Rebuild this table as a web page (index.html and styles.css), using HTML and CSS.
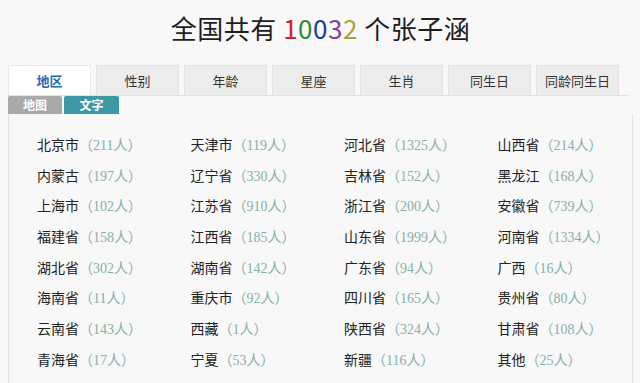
FILE: index.html
```html
<!DOCTYPE html>
<html lang="zh-CN">
<head>
<meta charset="utf-8">
<title>全国共有 10032 个张子涵</title>
<link rel="stylesheet" href="styles.css">
</head>
<body>
<div class="page">
  <h1 class="title">全国共有 <span class="n1">1</span><span class="n2">0</span><span class="n3">0</span><span class="n4">3</span><span class="n5">2</span> 个张子涵</h1>
  <div class="tabs">
    <div class="tab active">地区</div>
    <div class="tab">性别</div>
    <div class="tab">年龄</div>
    <div class="tab">星座</div>
    <div class="tab">生肖</div>
    <div class="tab">同生日</div>
    <div class="tab">同龄同生日</div>
  </div>
  <div class="subtabs">
    <div class="sub map">地图</div>
    <div class="sub text">文字</div>
  </div>
  <div class="panel">
    <ul class="grid">
      <li>北京市<span class="c">（211人）</span></li>
      <li>天津市<span class="c">（119人）</span></li>
      <li>河北省<span class="c">（1325人）</span></li>
      <li>山西省<span class="c">（214人）</span></li>
      <li>内蒙古<span class="c">（197人）</span></li>
      <li>辽宁省<span class="c">（330人）</span></li>
      <li>吉林省<span class="c">（152人）</span></li>
      <li>黑龙江<span class="c">（168人）</span></li>
      <li>上海市<span class="c">（102人）</span></li>
      <li>江苏省<span class="c">（910人）</span></li>
      <li>浙江省<span class="c">（200人）</span></li>
      <li>安徽省<span class="c">（739人）</span></li>
      <li>福建省<span class="c">（158人）</span></li>
      <li>江西省<span class="c">（185人）</span></li>
      <li>山东省<span class="c">（1999人）</span></li>
      <li>河南省<span class="c">（1334人）</span></li>
      <li>湖北省<span class="c">（302人）</span></li>
      <li>湖南省<span class="c">（142人）</span></li>
      <li>广东省<span class="c">（94人）</span></li>
      <li>广西<span class="c">（16人）</span></li>
      <li>海南省<span class="c">（11人）</span></li>
      <li>重庆市<span class="c">（92人）</span></li>
      <li>四川省<span class="c">（165人）</span></li>
      <li>贵州省<span class="c">（80人）</span></li>
      <li>云南省<span class="c">（143人）</span></li>
      <li>西藏<span class="c">（1人）</span></li>
      <li>陕西省<span class="c">（324人）</span></li>
      <li>甘肃省<span class="c">（108人）</span></li>
      <li>青海省<span class="c">（17人）</span></li>
      <li>宁夏<span class="c">（53人）</span></li>
      <li>新疆<span class="c">（116人）</span></li>
      <li>其他<span class="c">（25人）</span></li>
    </ul>
  </div>
</div>
</body>
</html>
```
FILE: styles.css
```css
html, body {
  margin: 0;
  padding: 0;
  background: #f8f8f9;
  overflow: hidden;
}
body {
  font-family: "Noto Sans CJK SC", "Noto Sans", sans-serif;
  color: #222;
}
.page {
  padding: 0 7px 0 8px;
}
.title {
  margin: 11px 0 0;
  height: 34px;
  line-height: 34px;
  font-size: 26px;
  font-weight: normal;
  text-align: center;
  color: #1e1e1e;
  letter-spacing: 0.5px;
}
.n1 { color: #d5202c; }
.n2 { color: #2b8c3a; }
.n3 { color: #1f3aa3; }
.n4 { color: #8a3e9c; }
.n5 { color: #a5a63a; }

.tabs {
  display: flex;
  gap: 5px;
  margin-top: 20px;
  margin-right: 4px;
  border-bottom: 1px solid #e2e2e4;
}
.tab {
  width: 81px;
  height: 29px;
  line-height: 29px;
  text-align: center;
  font-size: 13px;
  color: #333;
  background: #ededee;
  border: 1px solid #e4e4e6;
  border-bottom: none;
}
.tab.active {
  background: #fff;
  color: #2769b0;
  font-weight: bold;
  border-color: #e9e9eb;
}

.subtabs {
  display: flex;
  gap: 2px;
  height: 18px;
}
.sub {
  height: 18px;
  line-height: 18px;
  text-align: center;
  font-size: 12px;
  font-weight: bold;
  color: #fff;
  border-radius: 2px 2px 0 0;
}
.sub.map {
  width: 54px;
  background: #a9a9aa;
}
.sub.text {
  width: 55px;
  background: #3c98a5;
}

.panel {
  border-left: 1px solid #e0e0e2;
  border-right: 1px solid #e3e3e5;
  padding: 15px 0 20px 28px;
}
.grid {
  list-style: none;
  margin: 0;
  padding: 0;
  display: grid;
  grid-template-columns: repeat(4, 153.5px);
}
.grid li {
  font-size: 14px;
  line-height: 30.7px;
  height: 30.7px;
  color: #222;
  white-space: nowrap;
}
.c {
  font-family: "Liberation Serif", "Noto Sans CJK SC", serif;
  color: #86b0a8;
  font-size: 14px;
}
```
